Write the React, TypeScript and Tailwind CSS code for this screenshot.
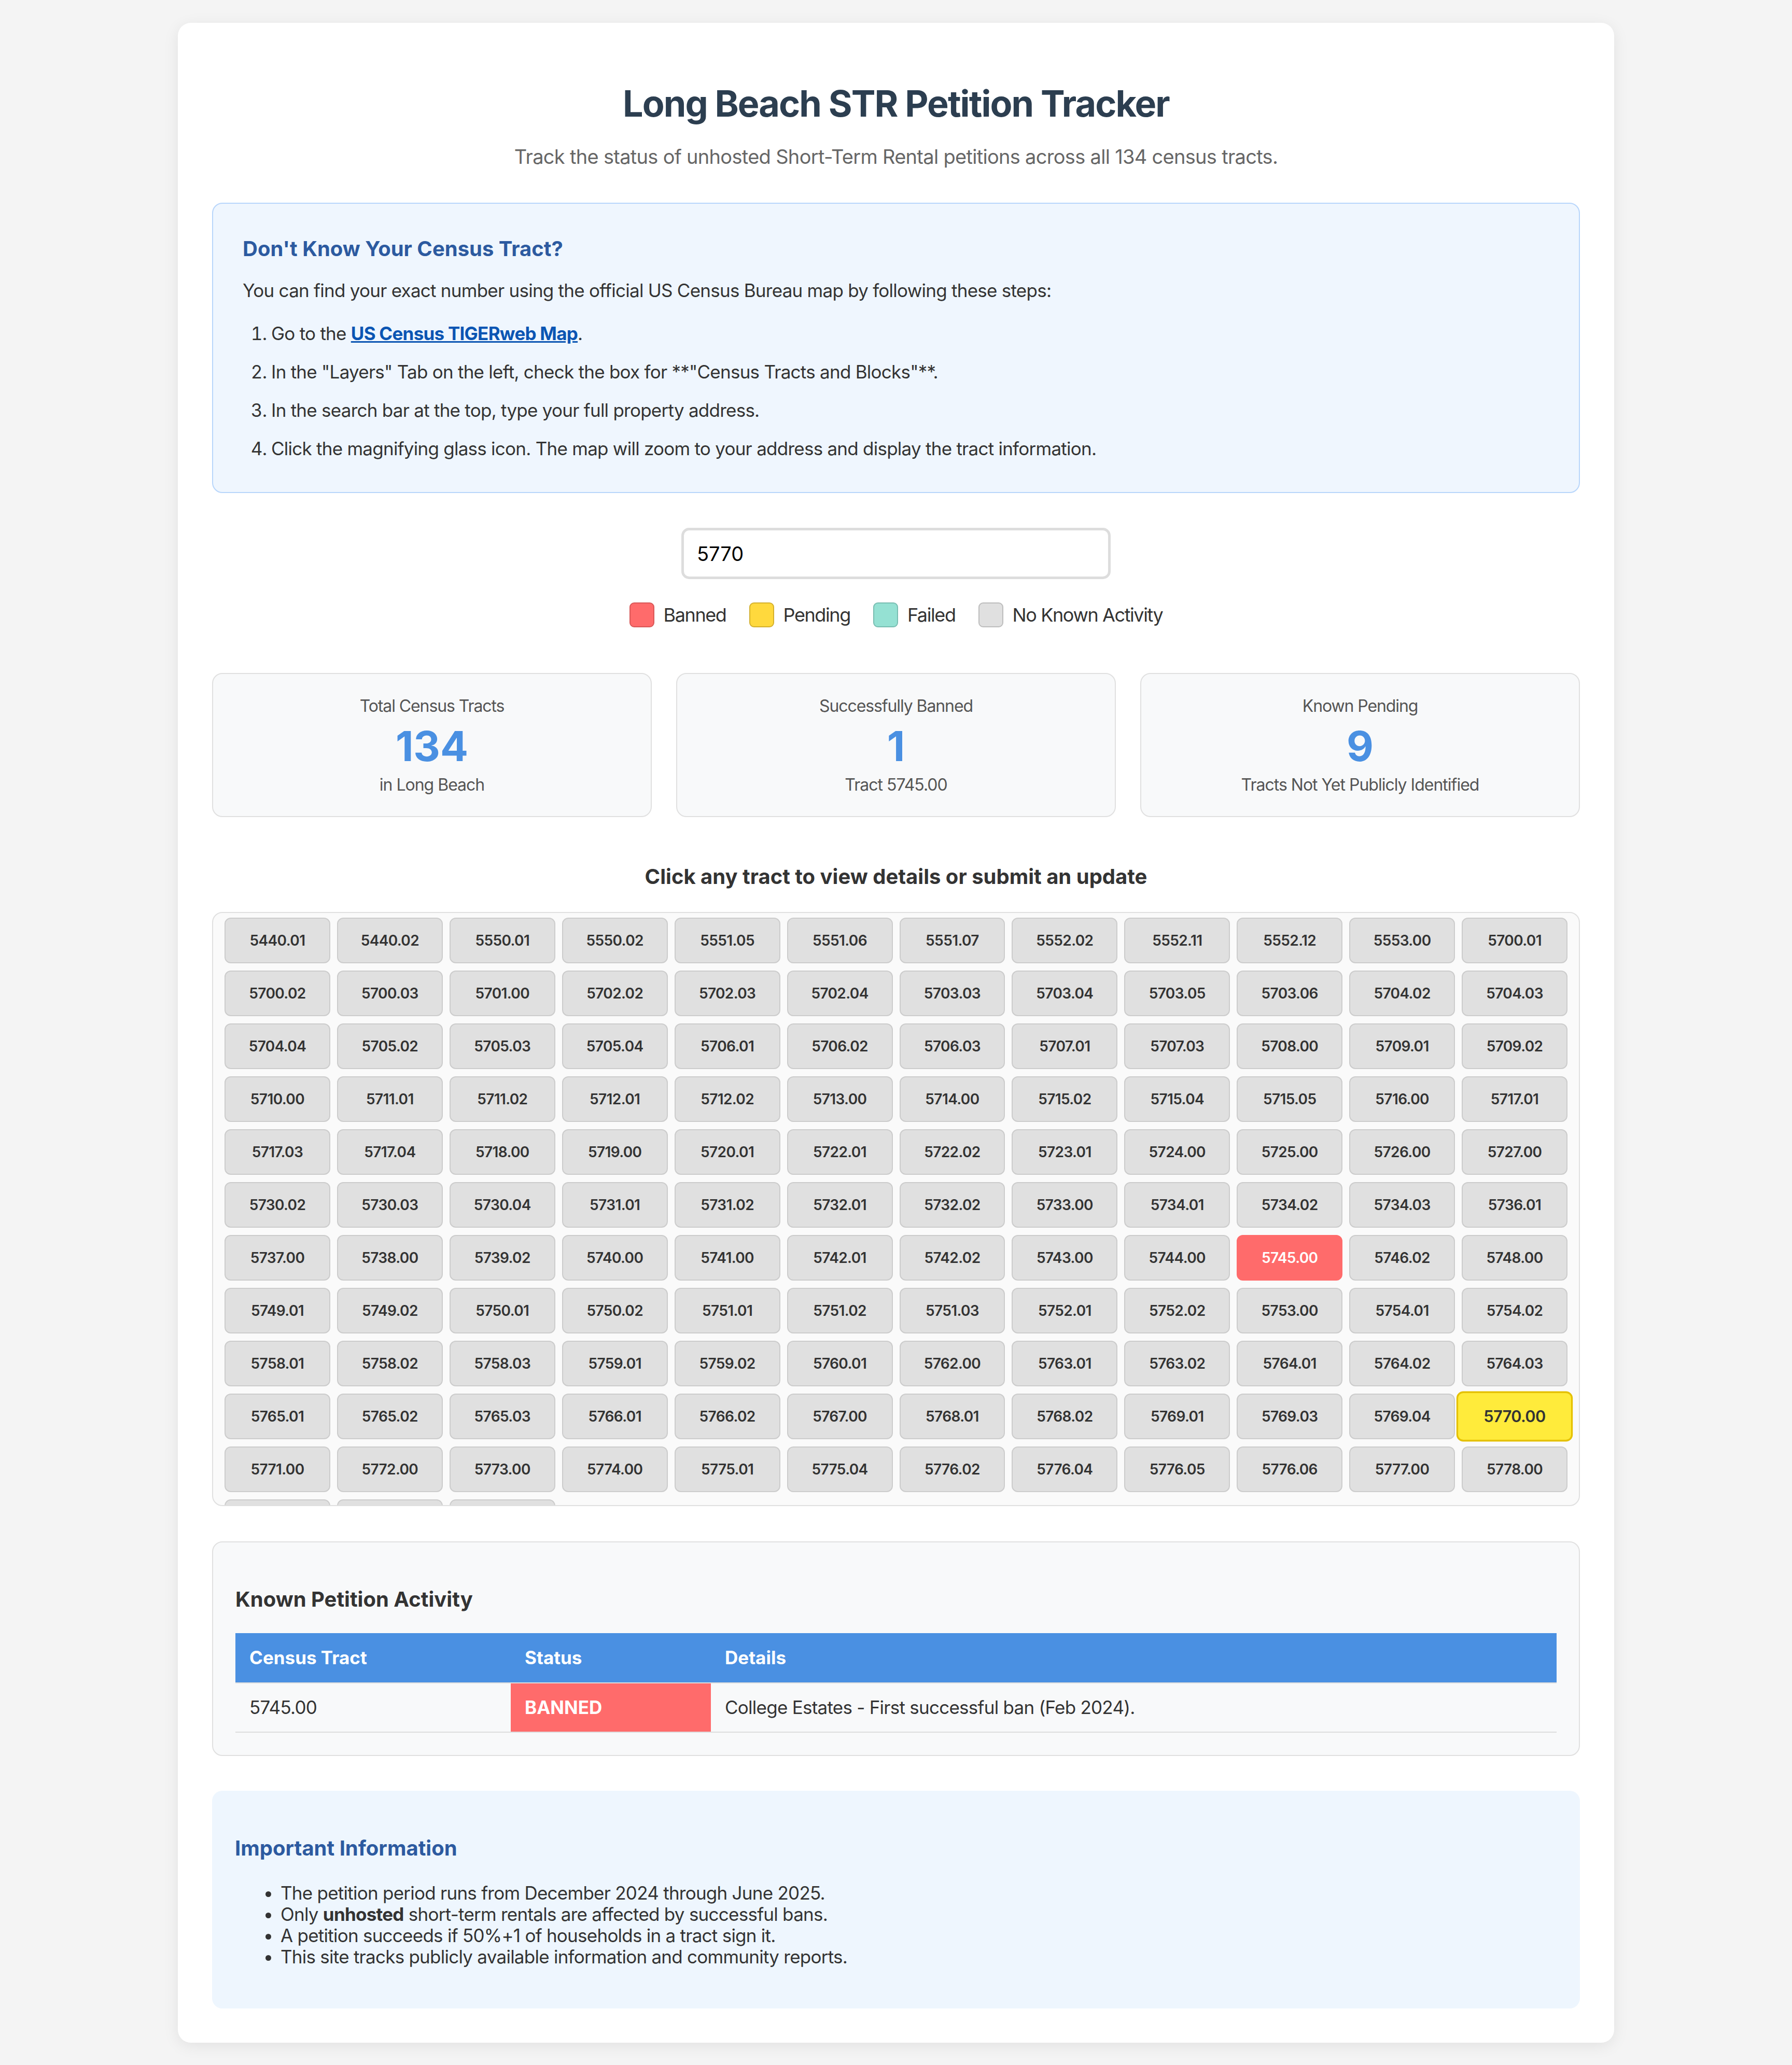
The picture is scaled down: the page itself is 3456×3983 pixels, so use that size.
import React from "react";

const rows: string[][] = [
	["5440.01", "5440.02", "5550.01", "5550.02", "5551.05", "5551.06", "5551.07", "5552.02", "5552.11", "5552.12", "5553.00", "5700.01"],
	["5700.02", "5700.03", "5701.00", "5702.02", "5702.03", "5702.04", "5703.03", "5703.04", "5703.05", "5703.06", "5704.02", "5704.03"],
	["5704.04", "5705.02", "5705.03", "5705.04", "5706.01", "5706.02", "5706.03", "5707.01", "5707.03", "5708.00", "5709.01", "5709.02"],
	["5710.00", "5711.01", "5711.02", "5712.01", "5712.02", "5713.00", "5714.00", "5715.02", "5715.04", "5715.05", "5716.00", "5717.01"],
	["5717.03", "5717.04", "5718.00", "5719.00", "5720.01", "5722.01", "5722.02", "5723.01", "5724.00", "5725.00", "5726.00", "5727.00"],
	["5730.02", "5730.03", "5730.04", "5731.01", "5731.02", "5732.01", "5732.02", "5733.00", "5734.01", "5734.02", "5734.03", "5736.01"],
	["5737.00", "5738.00", "5739.02", "5740.00", "5741.00", "5742.01", "5742.02", "5743.00", "5744.00", "5745.00", "5746.02", "5748.00"],
	["5749.01", "5749.02", "5750.01", "5750.02", "5751.01", "5751.02", "5751.03", "5752.01", "5752.02", "5753.00", "5754.01", "5754.02"],
	["5758.01", "5758.02", "5758.03", "5759.01", "5759.02", "5760.01", "5762.00", "5763.01", "5763.02", "5764.01", "5764.02", "5764.03"],
	["5765.01", "5765.02", "5765.03", "5766.01", "5766.02", "5767.00", "5768.01", "5768.02", "5769.01", "5769.03", "5769.04", "5770.00"],
	["5771.00", "5772.00", "5773.00", "5774.00", "5775.01", "5775.04", "5776.02", "5776.04", "5776.05", "5776.06", "5777.00", "5778.00"],
];

const tracts = rows.flat();
// last row sits below the fold of the scroll box, only its top edge shows
const hiddenRow = ["a", "b", "c"];

const legend = [
	{ label: "Banned", cls: "bg-[#ff6b6b] border-[#d95757]" },
	{ label: "Pending", cls: "bg-[#ffd93d] border-[#d4b02c]" },
	{ label: "Failed", cls: "bg-[#95e1d3] border-[#78bdb1]" },
	{ label: "No Known Activity", cls: "bg-[#e0e0e0] border-[#bdbdbd]" },
];

const TractCell = ({ id }: { id: string }) => {
	if (id === "5745.00") {
		return (
			<div className="h-[88px] flex items-center justify-center rounded-[12px] border-2 border-[#ff6b6b] bg-[#ff6b6b] text-white text-[28px] tracking-[-0.6px] font-semibold">
				{id}
			</div>
		);
	}
	if (id === "5770.00") {
		return (
			<div className="relative z-10 h-[88px] flex items-center justify-center rounded-[12px] border-[3px] border-[#e5c100] bg-[#ffeb3b] text-[#333] text-[28px] tracking-[-0.6px] font-semibold scale-110">
				{id}
			</div>
		);
	}
	return (
		<div className="h-[88px] flex items-center justify-center rounded-[12px] border-2 border-[#cccccc] bg-[#e0e0e0] text-[#333] text-[28px] tracking-[-0.6px] font-semibold">
			{id}
		</div>
	);
};

export default function App() {
	return (
		<div className="min-h-[3983px] bg-[#f4f4f4] pt-[44px] pb-[42px] font-['Inter',sans-serif]">
			<div className="mx-auto w-[2770px] bg-white rounded-[25px] p-[66px] shadow-[0_6px_30px_rgba(0,0,0,0.08)]">
				<h1 className="mt-[47px] text-center text-[70px] leading-[85px] tracking-[-1.9px] font-bold text-[#2c3e50]">
					Long Beach STR Petition Tracker
				</h1>
				<p className="mt-[37px] text-center text-[38px] leading-[46px] tracking-[-0.7px] text-[#666]">
					Track the status of unhosted Short-Term Rental petitions across all 134 census tracts.
				</p>

				{/* census tract help */}
				<div className="mt-[66px] rounded-[20px] border-2 border-[#b8d6fb] bg-[#eff6fe] px-[57px] pt-[63px] pb-[47px]">
					<h3 className="text-[40px] leading-[48px] font-bold text-[#2c5aa0]">
						Don't Know Your Census Tract?
					</h3>
					<p className="mt-[35px] text-[35px] leading-[42px] tracking-[-0.75px] text-[#333]">
						You can find your exact number using the official US Census Bureau map by following these steps:
					</p>
					<ol className="mt-[25px] list-decimal pl-[55px] text-[35px] leading-[74px] tracking-[-0.75px] text-[#333]">
						<li>
							Go to the{" "}
							<a className="font-bold text-[#0b55b3] underline" href="#">
								US Census TIGERweb Map
							</a>
							.
						</li>
						<li>In the "Layers" Tab on the left, check the box for **"Census Tracts and Blocks"**.</li>
						<li>In the search bar at the top, type your full property address.</li>
						<li>Click the magnifying glass icon. The map will zoom to your address and display the tract information.</li>
					</ol>
				</div>

				<div className="mt-[67px] flex justify-center">
					<input
						readOnly
						value="5770"
						className="w-[828px] h-[99px] rounded-[15px] border-[5px] border-[#dddddd] bg-white px-[25px] text-[38px] text-black outline-none"
					/>
				</div>

				<div className="mt-[45px] flex justify-center gap-[44px]">
					{legend.map((l) => (
						<div key={l.label} className="flex items-center gap-[18px]">
							<span className={`w-[48px] h-[48px] rounded-[9px] border-2 ${l.cls}`} />
							<span className="text-[36px] leading-[48px] tracking-[-1.4px] text-[#333]">{l.label}</span>
						</div>
					))}
				</div>

				{/* stats */}
				<div className="mt-[88px] grid grid-cols-3 gap-[47px]">
					{[
						["Total Census Tracts", "134", "in Long Beach"],
						["Successfully Banned", "1", "Tract 5745.00"],
						["Known Pending", "9", "Tracts Not Yet Publicly Identified"],
					].map(([label, num, sub]) => (
						<div key={label} className="rounded-[20px] border-2 border-[#e0e0e0] bg-[#f8f9fa] pt-[43px] pb-[41px] text-center">
							<div className="text-[32px] leading-[38px] tracking-[-1.1px] text-[#555]">{label}</div>
							<div className="mt-[10px] text-[80px] leading-[96px] font-bold text-[#4a90e2]">{num}</div>
							<div className="mt-[8px] text-[32px] leading-[38px] tracking-[-1px] text-[#555]">{sub}</div>
						</div>
					))}
				</div>

				<h3 className="mt-[91px] text-center text-[40px] leading-[48px] font-bold text-[#333]">
					Click any tract to view details or submit an update
				</h3>

				<div className="mt-[44px] h-[1146px] overflow-hidden rounded-[20px] border-2 border-[#e0e0e0] bg-[#fafafa] px-[22px] pt-[9px]">
					<div className="grid grid-cols-12 gap-x-[13px] gap-y-[14px]">
						{tracts.map((t) => (
							<TractCell key={t} id={t} />
						))}
						{hiddenRow.map((k) => (
							<div key={k} className="h-[88px] rounded-[12px] border-2 border-[#cccccc] bg-[#e0e0e0]" />
						))}
					</div>
				</div>

				{/* known activity */}
				<div className="mt-[68px] rounded-[20px] border-2 border-[#e0e0e0] bg-[#f8f9fa] px-[43px] pt-[86px] pb-[43px]">
					<h3 className="text-[40px] leading-[48px] font-bold text-[#333]">Known Petition Activity</h3>
					<table className="mt-[41px] w-full border-collapse text-[35px] text-left">
						<thead>
							<tr className="bg-[#4a90e2] text-white">
								<th className="w-[531px] h-[96px] pl-[27px] font-bold border-b-2 border-[#dddddd]">Census Tract</th>
								<th className="w-[386px] h-[96px] pl-[27px] font-bold border-b-2 border-[#dddddd]">Status</th>
								<th className="h-[96px] pl-[27px] font-bold border-b-2 border-[#dddddd]">Details</th>
							</tr>
						</thead>
						<tbody>
							<tr className="text-[#333] tracking-[-0.75px]">
								<td className="h-[95px] pl-[27px] border-b-2 border-[#dddddd]">5745.00</td>
								<td className="h-[95px] pl-[27px] border-b-2 border-[#dddddd] bg-[#ff6b6b] text-white font-bold tracking-normal">BANNED</td>
								<td className="h-[95px] pl-[27px] border-b-2 border-[#dddddd]">
									College Estates - First successful ban (Feb 2024).
								</td>
							</tr>
						</tbody>
					</table>
				</div>

				{/* important info */}
				<div className="mt-[67px] rounded-[20px] bg-[#eef6fe] pl-[44px] pr-[44px] pt-[87px] pb-[79px]">
					<h3 className="text-[40px] leading-[48px] font-bold text-[#2c5aa0]">Important Information</h3>
					<ul className="mt-[42px] list-disc pl-[88px] text-[35px] leading-[41px] tracking-[-0.75px] text-[#333]">
						<li>The petition period runs from December 2024 through June 2025.</li>
						<li>
							Only <strong>unhosted</strong> short-term rentals are affected by successful bans.
						</li>
						<li>A petition succeeds if 50%+1 of households in a tract sign it.</li>
						<li>This site tracks publicly available information and community reports.</li>
					</ul>
				</div>
			</div>
		</div>
	);
}
